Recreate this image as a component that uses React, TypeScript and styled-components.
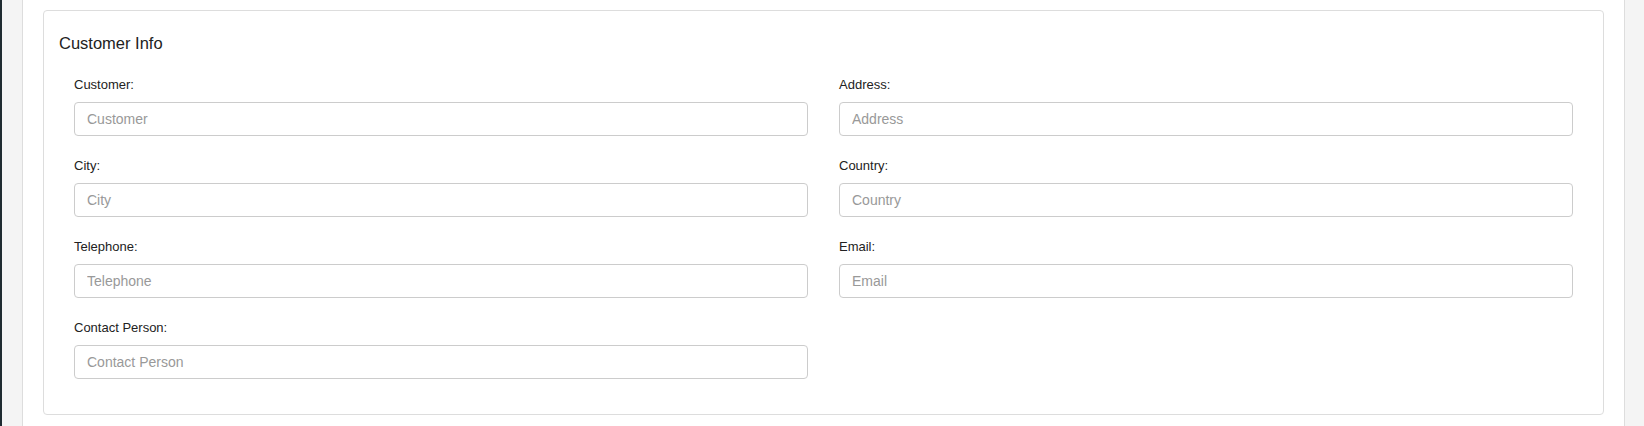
import React from 'react';
import styled, { createGlobalStyle } from 'styled-components';

const GlobalStyle = createGlobalStyle`
  html, body {
    margin: 0;
    padding: 0;
    background: #ffffff;
    font-family: "Liberation Sans", Arial, sans-serif;
    color: #333333;
  }
  * { box-sizing: border-box; }
`;

const customerFields = [
  { id: 'customer', label: 'Customer' },
  { id: 'address', label: 'Address' },
  { id: 'city', label: 'City' },
  { id: 'country', label: 'Country' },
  { id: 'telephone', label: 'Telephone' },
  { id: 'email', label: 'Email' },
  { id: 'contactPerson', label: 'Contact Person' },
];

const App: React.FC = () => {
  return (
    <>
      <GlobalStyle />
      <Layout>
        <SideEdge />
        <Gutter side="left" />
        <Main>
          <Panel>
            <PanelTitle>Customer Info</PanelTitle>
            <FieldGrid>
              {customerFields.map(({ id, label }) => (
                <FormGroup key={id}>
                  <Label htmlFor={id}>{label}:</Label>
                  <Input id={id} type="text" placeholder={label} />
                </FormGroup>
              ))}
            </FieldGrid>
          </Panel>
        </Main>
        <Gutter side="right" />
      </Layout>
    </>
  );
};

const Layout = styled.div`
  display: flex;
  width: 100%;
  height: 426px;
  overflow: hidden;
`;

const SideEdge = styled.div`
  width: 2px;
  flex-shrink: 0;
  background: #1f2b31;
`;

const Gutter = styled.div<{ side: 'left' | 'right' }>`
  width: ${({ side }) => (side === 'left' ? '21px' : '20px')};
  flex-shrink: 0;
  background: #f4f4f4;
  ${({ side }) => (side === 'left' ? 'border-right' : 'border-left')}: 1px solid #dddddd;
`;

const Main = styled.main`
  flex: 1;
  padding: 10px 20px 0;
  background: #ffffff;
`;

const Panel = styled.section`
  height: 405px;
  padding: 22px 15px 34px;
  border: 1px solid #dddddd;
  border-radius: 4px;
  background: #ffffff;
`;

const PanelTitle = styled.h3`
  margin: 0 0 23px;
  font-size: 16.5px;
  line-height: 20px;
  font-weight: 400;
  color: #222222;
`;

const FieldGrid = styled.div`
  display: grid;
  grid-template-columns: 1fr 1fr;
  column-gap: 31px;
  row-gap: 21px;
  padding: 0 15px;
`;

const FormGroup = styled.div`
  display: flex;
  flex-direction: column;
`;

const Label = styled.label`
  margin-bottom: 8px;
  font-size: 13px;
  line-height: 18px;
  color: #222222;
`;

const Input = styled.input`
  height: 34px;
  padding: 6px 12px;
  border: 1px solid #cccccc;
  border-radius: 4px;
  font-family: inherit;
  font-size: 14px;
  color: #555555;
  background: #ffffff;
  outline: none;

  &::placeholder {
    color: #999999;
  }
`;

export default App;
